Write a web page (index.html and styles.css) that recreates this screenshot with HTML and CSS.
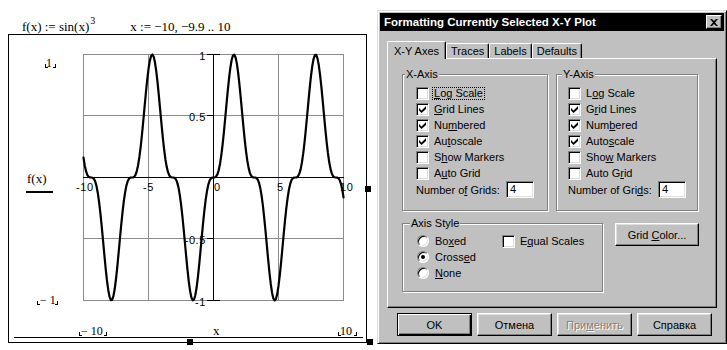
FILE: index.html
```html
<!DOCTYPE html>
<html lang="ru">
<head>
<meta charset="utf-8">
<title>Formatting Currently Selected X-Y Plot</title>
<link rel="stylesheet" href="styles.css">
</head>
<body>
<div class="page">
  <div class="sheet">
    <div class="formula">
      <span class="def">f(x) := sin(x)<sup>3</sup></span>
      <span class="range">x := −10, −9.9 .. 10</span>
    </div>
    <div class="plot">
      <svg class="graph" width="357" height="307" viewBox="9 35 357 307">
        <g class="gridlines" shape-rendering="crispEdges">
          <rect x="83.5" y="54.5" width="260" height="246"/>
          <line x1="148.5" y1="54" x2="148.5" y2="301"/>
          <line x1="278.5" y1="54" x2="278.5" y2="301"/>
          <line x1="83" y1="115.5" x2="344" y2="115.5"/>
          <line x1="83" y1="238.5" x2="344" y2="238.5"/>
        </g>
        <g class="axislines" shape-rendering="crispEdges">
          <line x1="83" y1="177.5" x2="344" y2="177.5"/>
          <line x1="213.5" y1="54" x2="213.5" y2="301"/>
          <line x1="207" y1="54.5" x2="220" y2="54.5"/>
          <line x1="207" y1="115.5" x2="214" y2="115.5"/>
          <line x1="207" y1="238.5" x2="214" y2="238.5"/>
          <line x1="207" y1="300.5" x2="220" y2="300.5"/>
          <line x1="14" y1="337.5" x2="363" y2="337.5"/>
          <path d="M45.5 64V67.5H48M55.5 64V67.5H53M37.5 301V304.5H40M57.5 301V304.5H55M79.5 332V335.5H82M106.5 332V335.5H104M338.5 332V335.5H341M356.5 332V335.5H354"/>
        </g>
        <rect class="fbar" x="26" y="191" width="27" height="2"/>
        <g class="tick">
          <text x="206" y="60" text-anchor="end">1</text>
          <text x="206" y="121" text-anchor="end">0.5</text>
          <text x="206" y="244" text-anchor="end">-0.5</text>
          <text x="206" y="306" text-anchor="end">-1</text>
          <text x="76" y="191">-10</text>
          <text x="143" y="191">-5</text>
          <text x="214" y="191">0</text>
          <text x="277" y="191">5</text>
          <text x="340" y="191">10</text>
        </g>
        <g class="lab">
          <text x="46" y="67">1</text>
          <text x="40" y="304">− 1</text>
          <text x="81" y="335">− 10</text>
          <text x="340" y="335">10</text>
        </g>
        <g class="lab big">
          <text x="27" y="183">f(x)</text>
          <text x="213" y="335">x</text>
        </g>
        <path id="curve" class="curve" d=""/>
      </svg>
      <span class="handle h-right"></span>
      <span class="handle h-bottom"></span>
      <span class="handle h-corner"></span>
    </div>
  </div>

  <div class="dialog">
    <div class="titlebar">
      <span class="title">Formatting Currently Selected X-Y Plot</span>
      <span class="close"><svg width="8" height="7" viewBox="0 0 8 7"><path d="M0 0H2L4 2L6 0H8L5 3.5L8 7H6L4 5L2 7H0L3 3.5Z"/></svg></span>
    </div>
    <div class="content">
      <div class="tabs">
        <div class="tab active">X-Y Axes</div>
        <div class="tab">Traces</div>
        <div class="tab">Labels</div>
        <div class="tab">Defaults</div>
      </div>
      <div class="panel">
        <div class="axes">
          <div class="group xgroup">
            <span class="legend">X-Axis</span>
            <div class="check"><span class="box"></span><span class="lbl focus"><u>L</u>og Scale</span></div>
            <div class="check"><span class="box"><svg class="mark" width="7" height="7" viewBox="0 0 7 7"><path d="M0 2L2.5 4.5L7 0V3L2.5 7L0 4.5Z"/></svg></span><span class="lbl"><u>G</u>rid Lines</span></div>
            <div class="check"><span class="box"><svg class="mark" width="7" height="7" viewBox="0 0 7 7"><path d="M0 2L2.5 4.5L7 0V3L2.5 7L0 4.5Z"/></svg></span><span class="lbl">Nu<u>m</u>bered</span></div>
            <div class="check"><span class="box"><svg class="mark" width="7" height="7" viewBox="0 0 7 7"><path d="M0 2L2.5 4.5L7 0V3L2.5 7L0 4.5Z"/></svg></span><span class="lbl">Au<u>t</u>oscale</span></div>
            <div class="check"><span class="box"></span><span class="lbl">S<u>h</u>ow Markers</span></div>
            <div class="check"><span class="box"></span><span class="lbl">A<u>u</u>to Grid</span></div>
            <div class="grids"><span class="glbl">Number o<u>f</u> Grids:</span><span class="field">4</span></div>
          </div>
          <div class="group ygroup">
            <span class="legend">Y-Axis</span>
            <div class="check"><span class="box"></span><span class="lbl">L<u>o</u>g Scale</span></div>
            <div class="check"><span class="box"><svg class="mark" width="7" height="7" viewBox="0 0 7 7"><path d="M0 2L2.5 4.5L7 0V3L2.5 7L0 4.5Z"/></svg></span><span class="lbl">G<u>r</u>id Lines</span></div>
            <div class="check"><span class="box"><svg class="mark" width="7" height="7" viewBox="0 0 7 7"><path d="M0 2L2.5 4.5L7 0V3L2.5 7L0 4.5Z"/></svg></span><span class="lbl">Num<u>b</u>ered</span></div>
            <div class="check"><span class="box"><svg class="mark" width="7" height="7" viewBox="0 0 7 7"><path d="M0 2L2.5 4.5L7 0V3L2.5 7L0 4.5Z"/></svg></span><span class="lbl">Auto<u>s</u>cale</span></div>
            <div class="check"><span class="box"></span><span class="lbl">Sho<u>w</u> Markers</span></div>
            <div class="check"><span class="box"></span><span class="lbl">Auto G<u>r</u>id</span></div>
            <div class="grids"><span class="glbl">Number of Gri<u>d</u>s:</span><span class="field">4</span></div>
          </div>
        </div>
        <div class="styles">
          <div class="group stylegroup">
            <span class="legend">Axis Style</span>
            <div class="style-grid">
              <div class="check"><span class="radio"></span><span class="lbl">Bo<u>x</u>ed</span></div>
              <div class="check"><span class="box"></span><span class="lbl">E<u>q</u>ual Scales</span></div>
              <div class="check"><span class="radio on"></span><span class="lbl">Cross<u>e</u>d</span></div>
              <div></div>
              <div class="check"><span class="radio"></span><span class="lbl"><u>N</u>one</span></div>
            </div>
          </div>
          <div class="btn gridcolor"><span>Grid <u>C</u>olor...</span></div>
        </div>
      </div>
      <div class="buttons">
        <div class="btn default"><span>OK</span></div>
        <div class="btn"><span>Отмена</span></div>
        <div class="btn disabled"><span>При<u>м</u>енить</span></div>
        <div class="btn"><span>Справка</span></div>
      </div>
    </div>
  </div>
</div>
<script src="script.js"></script>
</body>
</html>
```

FILE: styles.css
```css
* { box-sizing: border-box; }
html, body { margin: 0; padding: 0; }
body {
  width: 727px;
  height: 350px;
  overflow: hidden;
  background: #fff;
  font-family: "Liberation Sans", Arial, sans-serif;
}
.page { display: flex; align-items: flex-start; }

/* ---------- Mathcad worksheet ---------- */
.sheet { width: 377px; flex: none; }
.formula {
  height: 34px;
  padding: 19px 0 0 22px;
  font: 13px/15px "Liberation Serif", "Times New Roman", serif;
  white-space: nowrap;
  display: flex;
}
.formula sup { font-size: 10px; line-height: 0; vertical-align: 7px; margin-left: 1px; }
.range { margin-left: 35px; }

.plot {
  position: relative;
  margin-left: 8px;
  width: 359px;
  height: 309px;
  border: 1px solid #000;
}
.graph { display: block; }
.gridlines { stroke: #8c8c8c; stroke-width: 1; fill: none; }
.axislines { stroke: #000; stroke-width: 1; fill: none; }
.fbar { fill: #000; }
.tick text { font: 11px "Liberation Sans", Arial, sans-serif; letter-spacing: 0.6px; fill: #000; }
.lab text { font: 12px "Liberation Serif", "Times New Roman", serif; fill: #000; }
.lab.big text { font-size: 13px; }
.curve { fill: none; stroke: #000; stroke-width: 2.2; stroke-linejoin: round; stroke-linecap: round; }
.handle { position: absolute; width: 6px; height: 6px; background: #000; }
.h-right { left: 356px; top: 151px; }
.h-bottom { left: 178px; top: 304px; }
.h-corner { left: 358px; top: 304px; }

/* ---------- Dialog ---------- */
.dialog {
  flex: none;
  margin-top: 10px;
  width: 350px;
  height: 334px;
  background: #c0c0c0;
  border: 1px solid;
  border-color: #dfdfdf #000 #000 #dfdfdf;
  box-shadow: inset 1px 1px #fff, inset -1px -1px #808080;
  padding: 2px;
  font-size: 11px;
  color: #000;
}
.titlebar {
  height: 18px;
  background: #000;
  color: #fff;
  display: flex;
  align-items: center;
  justify-content: space-between;
  padding: 0 2px 0 4px;
}
.title { font-weight: bold; font-size: 11.5px; white-space: nowrap; }
.close {
  width: 16px;
  height: 14px;
  background: #c0c0c0;
  border: 1px solid;
  border-color: #fff #000 #000 #fff;
  box-shadow: inset -1px -1px #808080;
  display: flex;
  align-items: center;
  justify-content: center;
}
.close svg { display: block; fill: #000; }

.content { padding: 10px 7px 0 7px; }

.tabs {
  display: flex;
  align-items: flex-start;
  height: 18px;
  margin-bottom: -1px;
  position: relative;
  z-index: 1;
}
.tab {
  margin-top: 2px;
  height: 15px;
  padding: 1px 4px 0;
  line-height: 13px;
  border: 1px solid;
  border-bottom: none;
  border-color: #fff #000 #000 #fff;
  box-shadow: inset -1px 0 #808080;
  border-radius: 2px 2px 0 0;
  background: #c0c0c0;
  white-space: nowrap;
}
.tab.active {
  margin-top: 0;
  height: 18px;
  padding: 3px 6px 0;
}

.panel {
  height: 250px;
  border: 1px solid;
  border-color: #fff #000 #000 #fff;
  box-shadow: inset -1px -1px #808080;
  padding: 15px 0 0 14px;
}
.axes { display: flex; gap: 8px; }
.group {
  position: relative;
  border: 1px solid #808080;
  box-shadow: inset 1px 1px #fff, 1px 1px #fff;
}
.legend {
  position: absolute;
  top: -7px;
  padding: 0 1px;
  line-height: 13px;
  background: #c0c0c0;
  white-space: nowrap;
}
.xgroup { width: 146px; height: 137px; padding: 10px 0 0 13px; }
.xgroup .legend { left: 2px; }
.ygroup { width: 142px; height: 137px; padding: 10px 0 0 11px; }
.ygroup .legend { left: 5px; }

.check { display: flex; align-items: center; height: 16px; white-space: nowrap; }
.box {
  flex: none;
  width: 13px;
  height: 13px;
  margin-top: 1px;
  background: #fff;
  border: 1px solid;
  border-color: #808080 #fff #fff #808080;
  box-shadow: inset 1px 1px #000, inset -1px -1px #dfdfdf;
  display: flex;
  align-items: center;
  justify-content: center;
}
.mark { display: block; fill: #000; }
.lbl {
  margin-left: 3px;
  padding: 0 1px;
  line-height: 11px;
  border: 1px dotted transparent;
}
.lbl.focus { border-color: #000; }

.grids { display: flex; align-items: center; height: 17px; white-space: nowrap; }
.glbl { width: 90px; flex: none; }
.field {
  width: 28px;
  height: 17px;
  padding: 1px 0 0 3px;
  line-height: 13px;
  background: #fff;
  border: 1px solid;
  border-color: #808080 #fff #fff #808080;
  box-shadow: inset 1px 1px #000, inset -1px -1px #dfdfdf;
}

.styles { display: flex; align-items: flex-start; margin-top: 12px; }
.stylegroup { width: 201px; height: 69px; padding: 9px 0 0 14px; }
.stylegroup .legend { left: 7px; }
.style-grid { display: grid; grid-template-columns: 85px auto; }
.radio {
  flex: none;
  position: relative;
  width: 12px;
  height: 12px;
  margin-right: 1px;
  border-radius: 50%;
  background: #fff;
  border: 1px solid;
  border-color: #808080 #fff #fff #808080;
  box-shadow: inset 1px 1px #000, inset -1px -1px #dfdfdf;
}
.radio.on::after {
  content: "";
  position: absolute;
  left: 3px;
  top: 3px;
  width: 4px;
  height: 4px;
  border-radius: 50%;
  background: #000;
}

.btn {
  flex: none;
  width: 75px;
  height: 23px;
  display: flex;
  align-items: center;
  justify-content: center;
  background: #c0c0c0;
  border: 1px solid;
  border-color: #fff #000 #000 #fff;
  box-shadow: inset -1px -1px #808080, inset 1px 1px #dfdfdf;
  white-space: nowrap;
}
.gridcolor { width: 84px; margin-left: 12px; }
.buttons { display: flex; gap: 5px; padding: 5px 0 0 10px; }
.btn.default {
  border-color: #000;
  box-shadow: inset 1px 1px #fff, inset -1px -1px #000, inset -2px -2px #808080;
}
.btn.disabled { color: #808080; text-shadow: 1px 1px #fff; }
```

FILE: script.js
```js
(function () {
  var path = document.getElementById('curve');
  var d = '';
  for (var i = 0; i <= 200; i++) {
    var x = -10 + i * 0.1;
    var s = Math.sin(x);
    var y = s * s * s;
    var px = 213.5 + x * 13;
    var py = 177.5 - y * 123;
    d += (i ? 'L' : 'M') + px.toFixed(2) + ',' + py.toFixed(2);
  }
  path.setAttribute('d', d);
})();
```
